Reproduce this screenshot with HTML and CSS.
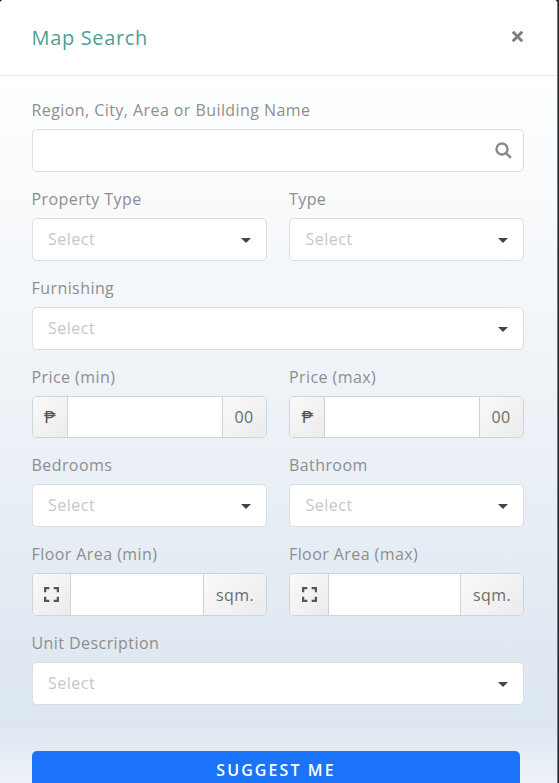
FILE: index.html
```html
<!DOCTYPE html>
<html lang="en">
<head>
<meta charset="utf-8">
<title>Map Search</title>
<link rel="stylesheet" href="styles.css">
</head>
<body>
<div class="modal">
  <header class="head">
    <h1 class="title">Map Search</h1>
    <svg class="close" viewBox="0 0 12 12" aria-label="Close"><path d="M1.6 1.6l8.8 8.8M10.4 1.6l-8.8 8.8"/></svg>
  </header>
  <form class="body">
    <div class="field">
      <label class="lbl">Region, City, Area or Building Name</label>
      <div class="ctl search">
        <svg class="mag" viewBox="0 0 16 16"><circle cx="6.6" cy="6.6" r="5.2"/><path d="M10.4 10.4l4.6 4.6"/></svg>
      </div>
    </div>
    <div class="row">
      <div class="field"><label class="lbl">Property Type</label><div class="ctl sel"><span>Select</span><i class="caret"></i></div></div>
      <div class="field"><label class="lbl">Type</label><div class="ctl sel"><span>Select</span><i class="caret"></i></div></div>
    </div>
    <div class="field"><label class="lbl">Furnishing</label><div class="ctl sel"><span>Select</span><i class="caret"></i></div></div>
    <div class="row">
      <div class="field"><label class="lbl">Price (min)</label><div class="group"><span class="add peso">₱</span><span class="mid"></span><span class="add cents">00</span></div></div>
      <div class="field"><label class="lbl">Price (max)</label><div class="group"><span class="add peso">₱</span><span class="mid"></span><span class="add cents">00</span></div></div>
    </div>
    <div class="row">
      <div class="field"><label class="lbl">Bedrooms</label><div class="ctl sel"><span>Select</span><i class="caret"></i></div></div>
      <div class="field"><label class="lbl">Bathroom</label><div class="ctl sel"><span>Select</span><i class="caret"></i></div></div>
    </div>
    <div class="row">
      <div class="field"><label class="lbl">Floor Area (min)</label><div class="group tall"><span class="add area"><svg class="exp" viewBox="0 0 14 14"><path d="M1 5V1h4M9 1h4v4M13 9v4H9M5 13H1V9"/></svg></span><span class="mid"></span><span class="add sqm">sqm.</span></div></div>
      <div class="field"><label class="lbl">Floor Area (max)</label><div class="group tall"><span class="add area"><svg class="exp" viewBox="0 0 14 14"><path d="M1 5V1h4M9 1h4v4M13 9v4H9M5 13H1V9"/></svg></span><span class="mid"></span><span class="add sqm">sqm.</span></div></div>
    </div>
    <div class="field"><label class="lbl">Unit Description</label><div class="ctl sel"><span>Select</span><i class="caret"></i></div></div>
  </form>
  <footer class="foot"><button type="button" class="btn">SUGGEST ME</button></footer>
</div>
</body>
</html>
```
FILE: styles.css
```css
* { box-sizing: border-box; }
html, body { margin: 0; height: 100%; }
body { background: #1d2a33; overflow: hidden; font-family: "Open Sans", "Liberation Sans", sans-serif; }
.modal { width: 558px; height: 783px; overflow: hidden; display: flex; flex-direction: column; background: #fff; border-right: 1px solid #777; border-radius: 4px 4px 0 0; }
.head { height: 76px; flex: none; padding: 0 33px 0 31.5px; display: flex; align-items: center; justify-content: space-between; border-bottom: 1px solid #e9ecef; background: #fff; }
.title { margin: 0; font-size: 20px; font-weight: 400; line-height: 24px; letter-spacing: .65px; color: #4e9f95; }
.close { width: 13px; height: 13px; fill: none; stroke: #808080; stroke-width: 2.8; margin-top: -3px; }
.body { height: 651px; flex: none; padding: 23px 33px 0 32px; display: flex; flex-direction: column; gap: 16px; background: linear-gradient(#fff, #dce6f0); }
.row { display: grid; grid-template-columns: 235px 234.55px; column-gap: 22.45px; }
.lbl { display: block; font-size: 16px; line-height: 22px; letter-spacing: .43px; color: #8e8e8e; margin: 0 0 8px -.5px; }
.ctl { height: 43px; background: #fff; border: 1px solid #dcdcdc; border-radius: 5px; display: flex; align-items: center; justify-content: space-between; padding: 0 16px 0 15px; }
.sel span { font-size: 16px; letter-spacing: .5px; color: #c6c6c6; padding-bottom: 2px; }
.caret { width: 0; height: 0; border: 5px solid transparent; border-top-color: #444; border-bottom: 0; margin-right: -1px; margin-top: 1px; }
.search { justify-content: flex-end; padding-right: 11px; }
.mag { width: 17px; height: 17px; fill: none; stroke: #8a8a8a; stroke-width: 2.3; }
.group { height: 42px; display: flex; border: 1px solid #ced4da; border-radius: 5px; background: #fff; overflow: hidden; }
.group.tall { height: 43px; }
.add { flex: none; display: flex; align-items: center; justify-content: center; background: linear-gradient(135deg, #fafafa, #ebebeb); color: #6c6c6c; font-size: 16px; letter-spacing: .4px; }
.mid { flex: 1; border-left: 1px solid #ced4da; border-right: 1px solid #ced4da; }
.peso { width: 34px; color: #555; font-family: Roboto, sans-serif; font-size: 16px; }
.cents { width: 43px; padding-right: 1px; }
.area { width: 37.2px; }
.sqm { width: 62px; }
.exp { width: 15px; height: 15px; fill: none; stroke: #4f5862; stroke-width: 2.2; }
.foot { flex: 1; background: linear-gradient(#dfe7f1, #f0f4fa); padding: 24px 37px 0 32px; }
.btn { width: 100%; height: 44px; border: 0; border-radius: 5px; background: #1a73f8; color: #fff; font: 600 16px "Open Sans", sans-serif; letter-spacing: 2.1px; padding: 0 0 6px; }
```
